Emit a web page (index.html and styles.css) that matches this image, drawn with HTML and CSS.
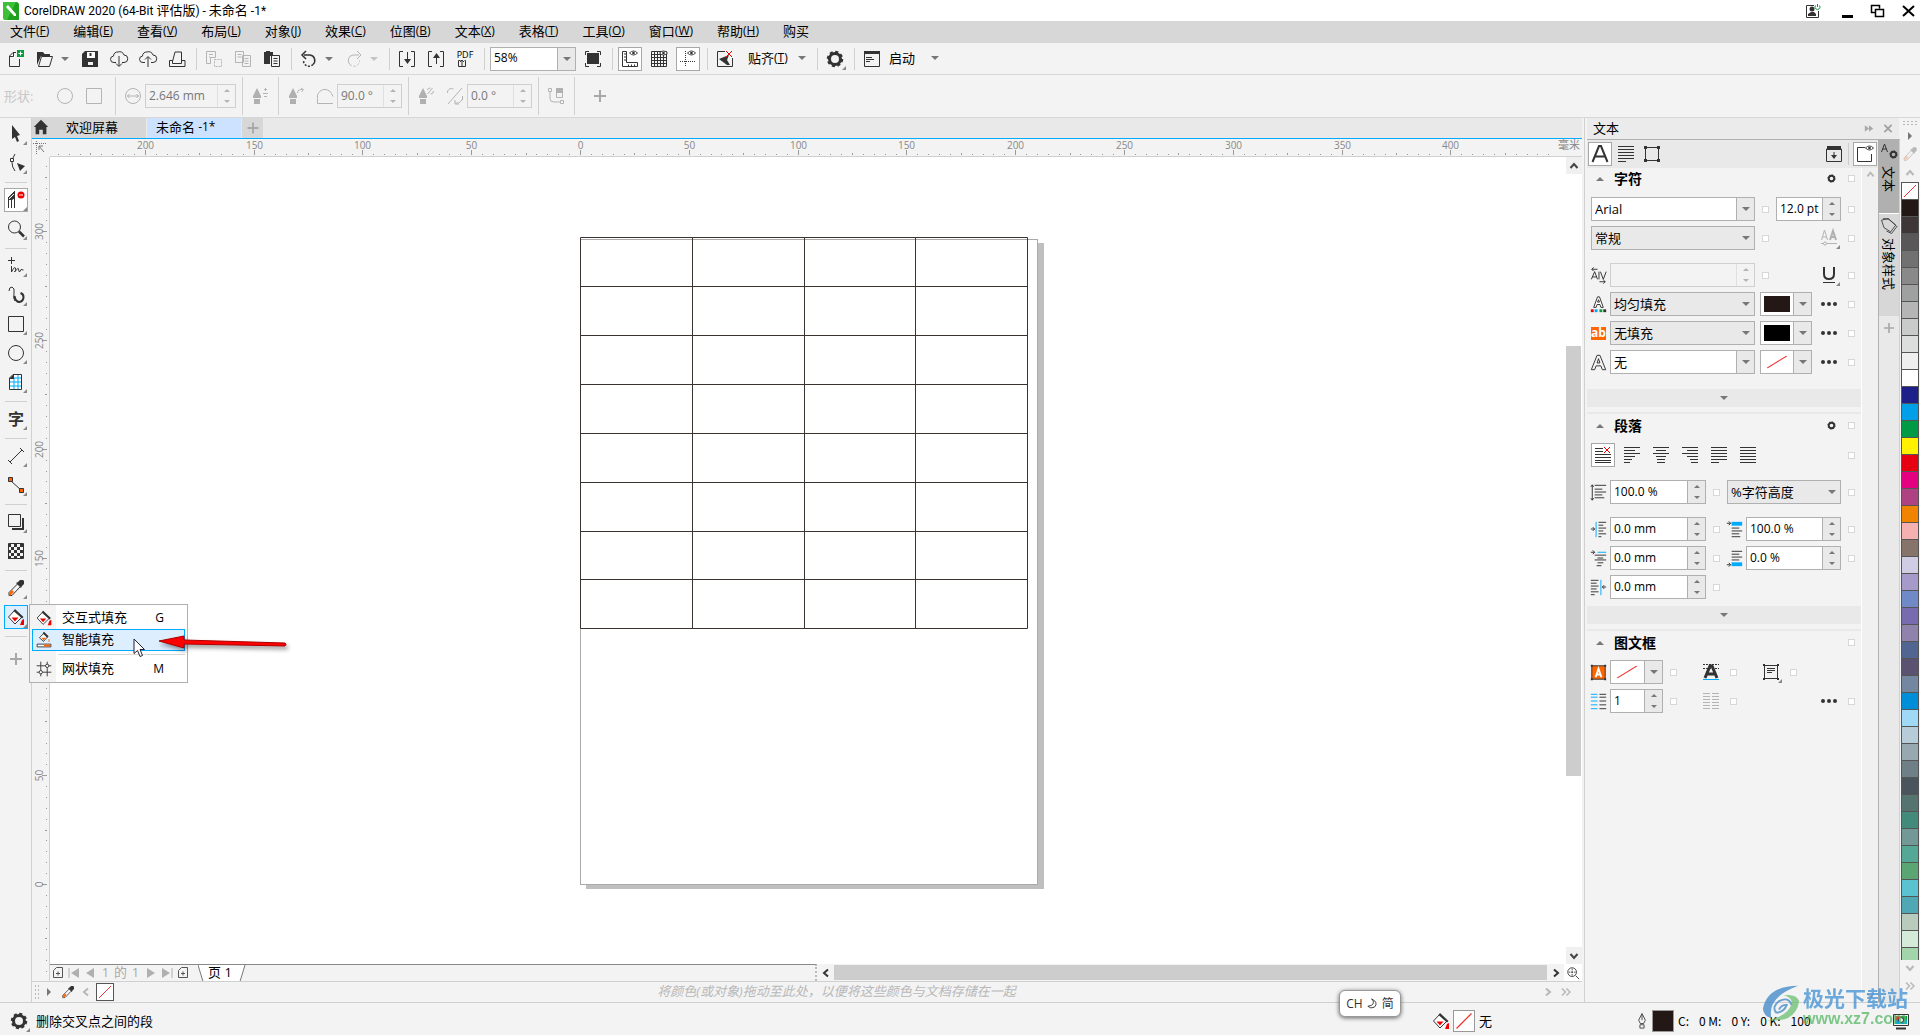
FILE: index.html
```html
<!DOCTYPE html>
<html lang="zh-CN">
<head>
<meta charset="utf-8">
<title>CorelDRAW 2020 (64-Bit 评估版) - 未命名 -1*</title>
<link rel="stylesheet" href="styles.css">
</head>
<body>
<svg class="defs" aria-hidden="true">
  <symbol id="i-new" viewBox="0 0 24 24"><path d="M12 5.500H9L5.500 9v10.500H15.500V12M9.500 5.500V9.500H5.500" class="s"/><path d="M13 3h7v7h-7z" fill="#0a9b3c"/><path d="M16.500 4.500v4M14.500 6.500h4" stroke="#fff"/></symbol>
  <symbol id="i-open" viewBox="0 0 24 24"><path d="M4 18V5h6l1.500 2H17v2H8z" fill="#333"/><path d="M8.500 9.500h11l-3 10h-11z" class="s"/></symbol>
  <symbol id="i-save" viewBox="0 0 24 24"><path d="M7 4h13v16H4V7z" fill="#333"/><path d="M9 5h8v6H9zM7 14h10" fill="#fff"/><path d="M12.500 6v3" stroke="#333" stroke-width="2"/><path d="M10 15h5v3h-5z" fill="#f3f3f3"/></symbol>
  <symbol id="i-cdown" viewBox="0 0 24 24"><path d="M9 15.500H7a3.200 3.200 0 0 1-.5-6.400A4 4 0 0 1 11 5a4.500 4.500 0 0 1 6 3 3.700 3.700 0 0 1 0 7.500h-2M12 9v10M9 16.500l3 3 3-3" class="s"/></symbol>
  <symbol id="i-cup" viewBox="0 0 24 24"><path d="M9 15.500H7a3.200 3.200 0 0 1-.5-6.400A4 4 0 0 1 11 5a4.500 4.500 0 0 1 6 3 3.700 3.700 0 0 1 0 7.500h-2M12 20V10M9 12.500l3-3 3 3" class="s"/></symbol>
  <symbol id="i-print" viewBox="0 0 24 24"><path d="M7.500 14.500L10 5h6.500v9.500M5 13.500h2.500v3h9v-3H20v6H4.500v-6z" class="s"/></symbol>
  <symbol id="i-cut" viewBox="0 0 24 24"><path d="M4.500 4.500h9v6h-5v6h-4zM7 7.500h4M7 10h1" class="g"/><path d="M12.500 12.500h7v7h-7z" class="g" stroke-dasharray="2 1"/></symbol>
  <symbol id="i-copy" viewBox="0 0 24 24"><path d="M4.500 4.500h8v11h-8zM6.500 7.500h4M6.500 10h4M11.500 8.500h8v11h-8zM13.500 11.500h4M13.500 14h4M13.500 16.500h4" class="g"/></symbol>
  <symbol id="i-paste" viewBox="0 0 24 24"><path d="M4 5h2V4h4v1h3v4h-3v8H4z" fill="#333"/><path d="M11.500 8.500h8v11h-8zM13.500 11.500h4M13.500 14h4M13.500 16.500h4" class="s"/></symbol>
  <symbol id="i-undo" viewBox="0 0 24 24"><path d="M7 8h6a5.500 5.500 0 0 1 3 9.500" fill="none" stroke="#333" stroke-width="1.500"/><path d="M16 17.500a5.500 5.500 0 0 1-9.500-4" fill="none" stroke="#333" stroke-width="1.500" stroke-dasharray="2 1.500"/><path d="M9 4L5 8l4 4" fill="none" stroke="#333" stroke-width="1.500"/></symbol>
  <symbol id="i-redo" viewBox="0 0 24 24"><path d="M17 8h-6a5.500 5.500 0 0 0-3 9.500" class="g"/><path d="M8 17.500a5.500 5.500 0 0 0 9.500-4" class="g" stroke-dasharray="2 2"/><path d="M15 4l4 4-4 4" class="g"/></symbol>
  <symbol id="i-import" viewBox="0 0 24 24"><path d="M8 4.500H4.500v15H8M16 4.500h3.500v15H16M12.500 5v10" class="s"/><path d="M9 12h7l-3.500 5z" fill="#333"/></symbol>
  <symbol id="i-export" viewBox="0 0 24 24"><path d="M8 4.500H4.500v15H8M16 4.500h3.500v15H16M12.500 17V8" class="s"/><path d="M9 11h7l-3.500-5z" fill="#333"/></symbol>
  <symbol id="i-pdf" viewBox="0 0 24 24"><path d="M5.500 19.500v-6h2M11.500 13.500h1v6h-7M9 19v-6M7 15l2-2 2 2" class="s"/></symbol>
  <symbol id="i-fit" viewBox="0 0 24 24"><path d="M6 6h12v11H6z" fill="#333"/><path d="M4.500 8V4.500H8M16 4.500h3.500V8M19.500 16v3.500H16M8 19.500H4.500V16" class="s"/></symbol>
  <symbol id="i-eye" viewBox="0 0 10 6"><path d="M.5 3Q5-1.500 9.500 3 5 7.500.5 3z" fill="#fff" stroke="#333"/><circle cx="5" cy="3" r="1.500" fill="#333"/></symbol>
  <symbol id="i-rulers" viewBox="0 0 24 24"><path d="M4.500 4.500h4v11h11v4h-15zM6 7h2.500M6 10h2.500M6 13h2.500M10.500 17.500v2M13.500 17.500v2M16.500 17.500v2" class="s"/><use href="#i-eye" x="11" y="3" width="9" height="6"/></symbol>
  <symbol id="i-grid" viewBox="0 0 24 24"><path d="M4.500 4.500h15v15h-15zM7.500 4v16M10.500 4v16M13.500 4v16M16.500 4v16M4 7.500h16M4 10.500h16M4 13.500h16M4 16.500h16" class="s"/><use href="#i-eye" x="12" y="3" width="9" height="6"/></symbol>
  <symbol id="i-guides" viewBox="0 0 24 24"><path d="M9.500 4v16M4 14.500h16" class="s" stroke-dasharray="1 1"/><use href="#i-eye" x="11" y="3" width="9" height="6"/></symbol>
  <symbol id="i-snap" viewBox="0 0 24 24"><path d="M12 4.500H4.500v15h15V11" class="s"/><path d="M6 12l10-4-2 5 3 5h-3z" fill="#333"/><path d="M13 4l6 6M19 4l-6 6" stroke="#e00"/></symbol>
  <symbol id="i-gear" viewBox="0 0 24 24"><circle cx="12" cy="12" r="5.500" fill="none" stroke="#333" stroke-width="3"/><circle cx="12" cy="12" r="7" fill="none" stroke="#333" stroke-width="2.500" stroke-dasharray="3 2.500"/></symbol>
  <symbol id="i-window" viewBox="0 0 24 24"><path d="M4.500 4.500h15v15h-15z" class="s"/><path d="M4 4h16v3H4z" fill="#333"/><path d="M6 10.500h6M6 12.500h8M6 14.500h4" class="s"/></symbol>
  <symbol id="i-ring" viewBox="0 0 24 24"><circle cx="12" cy="12" r="7.500" class="g"/></symbol>
  <symbol id="i-box" viewBox="0 0 24 24"><path d="M4.500 4.500h15v15h-15z" class="g"/></symbol>
  <symbol id="i-diam" viewBox="0 0 24 24"><circle cx="12" cy="12" r="7.500" class="g"/><path d="M6 12h12M8.500 10l-2 2 2 2M15.500 10l2 2-2 2" class="g"/></symbol>
  <symbol id="i-nib" viewBox="0 0 24 24"><path d="M9 4l4 8v2H5v-2zM6 15h6v5H6z" fill="#b0b0b0"/></symbol>
  <symbol id="i-nib1" viewBox="0 0 24 24"><use href="#i-nib"/><path d="M17.500 4v3M16 5.500h3M15 9.500h5M16 12.500h3" class="g"/></symbol>
  <symbol id="i-nib2" viewBox="0 0 24 24"><use href="#i-nib"/><path d="M13.500 9q0-4 5-3.500M17 4l2.500 1.500L17.500 8" class="g"/></symbol>
  <symbol id="i-nib3" viewBox="0 0 24 24"><use href="#i-nib"/><path d="M13.500 10l5-6M13.500 6q0-2 3-2M19.500 7q0 3-3 3" class="g"/></symbol>
  <symbol id="i-arc" viewBox="0 0 24 24"><path d="M20 19.500H4.500v-5a7.500 7.500 0 0 1 14-5l1.500 3" class="g"/></symbol>
  <symbol id="i-tilt" viewBox="0 0 24 24"><path d="M5 20L19 4M4.500 9a4 4 0 0 1 6-4M19.500 12a6 6 0 0 1-7 7M19.500 12v4M12 16v4h4" class="g"/></symbol>
  <symbol id="i-path" viewBox="0 0 24 24"><path d="M4.500 4.500h3v3h-3zM16.500 16.500h3v3h-3zM6 8v7q0 3 4 3h6M12.500 8.500h6v5h-6z" class="g"/><path d="M12 4h7v5h-7z" fill="#b0b0b0"/></symbol>
  <symbol id="i-plus" viewBox="0 0 24 24"><path d="M12 6v12M6 12h12" stroke="#a8a8a8" stroke-width="2"/></symbol>
  <symbol id="i-pick" viewBox="0 0 24 24"><path d="M8 3l8 10-3 1 2 5-2 1-2-5-3 2z" fill="#333"/></symbol>
  <symbol id="i-shape" viewBox="0 0 24 24"><path d="M11 3q-6 9 0 17" class="s"/><path d="M6.500 7.500h3v3h-3z" fill="#fff" stroke="#333"/><path d="M13 12l8 3-5 5z" fill="#333"/></symbol>
  <symbol id="i-seg" viewBox="0 0 24 24"><path d="M10.500 3v17M4.500 10v10M7.500 11v9M4 10l7-7" class="s"/><path d="M4 11l7-8v7l-3 2H4z" fill="#333"/><path d="M5 11l5-5" stroke="#fff"/><circle cx="17" cy="7" r="3.500" fill="#e00"/><path d="M15 7h4" stroke="#fff"/></symbol>
  <symbol id="i-zoom" viewBox="0 0 24 24"><circle cx="10.500" cy="10" r="6" class="s"/><path d="M15 14.500l5 5" stroke="#333" stroke-width="2.500"/></symbol>
  <symbol id="i-free" viewBox="0 0 24 24"><path d="M7.500 3v7M4 6.500h7M7.500 12v6q3-6 4-4t-1 4q4-5 4-3t1 3q1-4 4-2" class="s"/></symbol>
  <symbol id="i-art" viewBox="0 0 24 24"><path d="M5 8q0-4 3-4 3 1 2 6-1 6 1 8" class="s"/><path d="M10.500 13q1 6 5 6 4-1 4-5 0-3-3-4" fill="none" stroke="#333" stroke-width="2"/></symbol>
  <symbol id="i-rect" viewBox="0 0 24 24"><path d="M4.500 4.500h15v15h-15z" class="s"/></symbol>
  <symbol id="i-ell" viewBox="0 0 24 24"><circle cx="12" cy="12" r="7.500" class="s"/></symbol>
  <symbol id="i-table" viewBox="0 0 24 24"><path d="M9 4.500h8.500v15h-12V8z" fill="#fff" stroke="#333"/><path d="M6 12h11M6 16h11M10 8v11M14 5v14M10 8h7" stroke="#0af"/><path d="M5 9l5-5v5z" fill="#333"/></symbol>
  <symbol id="i-dim" viewBox="0 0 24 24"><path d="M6 18L18 6M4 16l4 4M16 4l4 4" class="s"/></symbol>
  <symbol id="i-conn" viewBox="0 0 24 24"><path d="M7 8l10 9" class="s"/><path d="M4.500 4.500h4v4h-4zM15.500 15.500h4v4h-4z" fill="#f60" stroke="#333"/></symbol>
  <symbol id="i-shadow" viewBox="0 0 24 24"><path d="M18 8h2v12H8v-2h10z" fill="#333"/><path d="M4.500 4.500h12v12h-12z" fill="#f3f3f3" stroke="#333"/></symbol>
  <symbol id="i-trans" viewBox="0 0 24 24"><path d="M4.500 4.500h15v15h-15z" class="s"/><path d="M4 6.500h16M4 12.500h16M4 18.500h16" stroke="#333" stroke-width="3" stroke-dasharray="3 3"/><path d="M7 9.500h13M7 15.500h13" stroke="#333" stroke-width="3" stroke-dasharray="3 3"/></symbol>
  <symbol id="i-eyed" viewBox="0 0 24 24"><path d="M13.500 8L5 16.500V19.500H8L16 11" class="s"/><path d="M5 17l3-3 2 2-3.500 3.500H5z" fill="#f60"/><path d="M12 7l2-1 2-2h3l1 1v3l-2 2-1 2z" fill="#333"/></symbol>
  <symbol id="i-bucket" viewBox="0 0 24 24"><path d="M11 5l7 7-7 7-6.500-7z" fill="#fff" stroke="#333"/><path d="M11 4l8.500 8-1.500 1.500L9.500 6z" fill="#333"/><path d="M7.500 12.500h7l-3.500 4zM18 15l2-1v6h-4z" fill="#e00"/></symbol>
  <symbol id="i-smart" viewBox="0 0 24 24"><path d="M12 4.500l4 4-4.500 5-4.500-4z" fill="#fff" stroke="#333"/><path d="M12 3l5 5-1.500 1.500-5-5z" fill="#333"/><path d="M9 9.500h5l-2.500 3z" fill="#f60"/><path d="M17.500 11v3" stroke="#f60"/><path d="M4.500 16.500h15v3h-15z" fill="#fff" stroke="#333"/><path d="M12 17h7v2h-7z" fill="#f60"/></symbol>
  <symbol id="i-mesh" viewBox="0 0 24 24"><path d="M8.500 4v16M15.500 4v16M4 8.500h16M4 15.500h16" class="s"/><circle cx="8.500" cy="15.500" r="1.800" fill="#fff" stroke="#333"/><circle cx="15.500" cy="8.500" r="1.800" fill="#fff" stroke="#333"/></symbol>
  <symbol id="i-home" viewBox="0 0 20 20"><path d="M10 2l8 8h-2v8h-4v-5H8v5H4v-8H2z" fill="#333"/></symbol>
  <symbol id="i-origin" viewBox="0 0 16 16"><path d="M4.500 2v13M1 4.500h13" stroke="#777" stroke-dasharray="1 1"/><path d="M7 11V7h4M7 7l5 6" fill="none" stroke="#777"/></symbol>
  <symbol id="i-acap" viewBox="0 0 24 24"><path d="M4.500 20L11 4h2l6.500 16M7 14.500h10" fill="none" stroke="#333" stroke-width="2"/></symbol>
  <symbol id="i-just" viewBox="0 0 24 24"><path d="M4 4.500h16M4 7.500h16M4 10.500h16M4 13.500h16M4 16.500h16M4 19.500h8" class="s"/></symbol>
  <symbol id="i-full" viewBox="0 0 24 24"><path d="M4 4.500h16M4 7.500h16M4 10.500h16M4 13.500h16M4 16.500h16M4 19.500h16" class="s"/></symbol>
  <symbol id="i-left" viewBox="0 0 24 24"><path d="M4 4.500h16M4 7.500h11M4 10.500h16M4 13.500h11M4 16.500h8M4 19.500h6" class="s"/></symbol>
  <symbol id="i-center" viewBox="0 0 24 24"><path d="M4 4.500h16M7 7.500h10M4 10.500h16M7 13.500h10M8 16.500h8M8 19.500h8" class="s"/></symbol>
  <symbol id="i-right" viewBox="0 0 24 24"><path d="M4 4.500h16M9 7.500h11M4 10.500h16M9 13.500h11M12 16.500h8M13 19.500h7" class="s"/></symbol>
  <symbol id="i-noalign" viewBox="0 0 24 24"><path d="M4 5.500h8M4 8.500h8M4 11.500h16M4 14.500h16M4 17.500h16M4 19.500h16" class="s"/><path d="M13 4l6 6M19 4l-6 6" stroke="#e00"/></symbol>
  <symbol id="i-frame" viewBox="0 0 24 24"><path d="M5.500 5.500h13v13h-13z" class="s"/><path d="M4 4h3v3H4zM17 4h3v3h-3zM4 17h3v3H4zM17 17h3v3h-3z" fill="#333"/></symbol>
  <symbol id="i-dock" viewBox="0 0 24 24"><path d="M4.500 7.500h15v12h-15zM12 10v6" class="s"/><path d="M5 4h14v2l1 2H4l1-2zM9 13h6l-3 4z" fill="#333"/></symbol>
  <symbol id="i-prev" viewBox="0 0 24 24"><path d="M12 5.500H4.500v14h14V12" class="s"/><use href="#i-eye" x="12" y="3" width="9" height="6"/></symbol>
  <symbol id="i-sgear" viewBox="0 0 12 12"><circle cx="6" cy="6" r="3" fill="none" stroke="#333" stroke-width="2"/><circle cx="6" cy="6" r="4" fill="none" stroke="#333" stroke-dasharray="1.500 1.600"/></symbol>
  <symbol id="i-kern" viewBox="0 0 24 24"><path d="M4.500 16L8 8l3 8M5.500 13.500H10M12.500 8v8M14 8l3 8 3-8M5 5.500h6M5 5.500l2-2M5 5.500l2 2M13 18.500h6M19 18.500l-2-2M19 18.500l-2 2" class="s"/></symbol>
  <symbol id="i-fillA" viewBox="0 0 24 24"><path d="M7 15l4-11h2l4 11h-2.500l-1-3h-3l-1 3zM11 9.500h2L12 7z" fill="#fff" stroke="#333"/><path d="M4 17h3v3H4z" fill="#e00"/><path d="M8 17h3v3H8z" fill="#0af"/><path d="M13 17h3v3h-3z" fill="#0a9b3c"/><path d="M17 17h3v3h-3z" fill="#333"/></symbol>
  <symbol id="i-outA" viewBox="0 0 24 24"><path d="M4.500 19.500l6-15h3l6 15H16l-1.500-4h-5l-1.500 4zM10.500 12.500h3L12 8z" class="s"/></symbol>
  <symbol id="i-ul" viewBox="0 0 24 24"><path d="M7 4v7q0 5 5 5t5-5V4" fill="none" stroke="#333" stroke-width="2"/><path d="M6 19.500h12" class="s"/></symbol>
  <symbol id="i-aa" viewBox="0 0 24 24"><path d="M4.500 14l3-10 3 10M5.500 11h4" class="g"/><path d="M13 14l3-9 3 9M14 11h4" fill="none" stroke="#b0b0b0" stroke-width="2"/><path d="M4 17.500h16" class="g"/><circle cx="8" cy="17.500" r="1.500" fill="#f3f3f3" stroke="#b0b0b0"/></symbol>
  <symbol id="i-dots" viewBox="0 0 24 24"><circle cx="6" cy="12" r="2" fill="#333"/><circle cx="12" cy="12" r="2" fill="#333"/><circle cx="18" cy="12" r="2" fill="#333"/></symbol>
  <symbol id="i-lead" viewBox="0 0 24 24"><path d="M5.500 4v16M4 6l1.500-2L7 6M4 18l1.500 2L7 18M8 4.500h12M8 8.500h8M8 11.500h12M8 14.500h8M8 17.500h10" class="s"/></symbol>
  <symbol id="i-indl" viewBox="0 0 24 24"><path d="M4 11.500h4M6 9.500l2 2-2 2M12 4.500h8M12 7.500h5M12 10.500h8M12 13.500h5M12 16.500h8M12 19.500h3" class="s"/><path d="M9.500 4v16" stroke="#0af"/></symbol>
  <symbol id="i-indf" viewBox="0 0 24 24"><path d="M4 5.500h4M6 3.500l2 2-2 2M8 8.500h12M11 11.500h6M8 13.500h12M11 16.500h6M10 19.500h5" class="s"/><path d="M11 5.500h9" stroke="#0af"/></symbol>
  <symbol id="i-indr" viewBox="0 0 24 24"><path d="M4 4.500h8M4 7.500h6M4 10.500h8M4 13.500h6M4 16.500h8M4 19.500h4M16 11.500h4M18 9.500l-2 2 2 2" class="s"/><path d="M14.500 4v16" stroke="#0af"/></symbol>
  <symbol id="i-before" viewBox="0 0 24 24"><path d="M9 4h11v4H9z" fill="#0af"/><path d="M4 5.500h4M6 3.500l2 2-2 2M9 10.500h8M9 13.500h11M9 16.500h8M9 19.500h9" class="s"/></symbol>
  <symbol id="i-after" viewBox="0 0 24 24"><path d="M9 16h11v4H9z" fill="#0af"/><path d="M4 18.500h4M6 16.500l2 2-2 2M9 4.500h11M9 7.500h8M9 10.500h11M9 13.500h8" class="s"/></symbol>
  <symbol id="i-frA" viewBox="0 0 24 24"><path d="M5 5h14v14H5z" fill="#f60" stroke="#333"/><path d="M4 4h2v2H4zM18 4h2v2h-2zM4 18h2v2H4zM18 18h2v2h-2z" fill="#333"/><path d="M9 17l3-9 3 9M10 14h4" fill="none" stroke="#fff" stroke-width="2"/></symbol>
  <symbol id="i-vA" viewBox="0 0 24 24"><path d="M6 18l5-12h2l5 12M8 14h8" fill="none" stroke="#333" stroke-width="3"/><path d="M4 4.500h16M4 8.500h16" class="s" stroke-dasharray="2 1"/><path d="M4 19.500h16" stroke="#0af"/></symbol>
  <symbol id="i-frl" viewBox="0 0 24 24"><path d="M5.500 5.500h13v13h-13zM8 8.500h8M8 10.500h8M8 12.500h5" class="s"/><path d="M4 4h2v2H4zM18 4h2v2h-2zM4 18h2v2H4zM18 18h2v2h-2z" fill="#333"/></symbol>
  <symbol id="i-cols" viewBox="0 0 24 24"><path d="M4 4.500h7M4 7.500h7M4 11.500h7M4 15.500h7M4 19.500h7" stroke="#0af"/><path d="M13 4.500h7M13 7.500h7M13 11.500h7M13 15.500h7M13 19.500h7" class="s"/></symbol>
  <symbol id="i-gcols" viewBox="0 0 24 24"><path d="M4 4.500h7M4 7.500h7M4 10.500h7M4 13.500h7M4 16.500h7M4 19.500h7M13 4.500h7M13 7.500h7M13 10.500h7M13 13.500h7M13 16.500h7M13 19.500h7" class="g"/></symbol>
  <symbol id="i-addp" viewBox="0 0 10 12"><path d="M3.500.5h6v10h-9v-7zM3 6.500h4M5 4.500v4" fill="none" stroke="#555"/></symbol>
  <symbol id="i-up" viewBox="0 0 10 10"><path d="M1.500 7L5 3l3.500 4" fill="none" stroke="currentColor" stroke-width="2"/></symbol>
  <symbol id="i-down" viewBox="0 0 10 10"><path d="M1.500 3L5 7l3.500-4" fill="none" stroke="currentColor" stroke-width="2"/></symbol>
  <symbol id="i-lt" viewBox="0 0 10 10"><path d="M7 1.500L3 5l4 3.500" fill="none" stroke="currentColor" stroke-width="2"/></symbol>
  <symbol id="i-gt" viewBox="0 0 10 10"><path d="M3 1.500L7 5 3 8.500" fill="none" stroke="currentColor" stroke-width="2"/></symbol>
  <symbol id="i-dgt" viewBox="0 0 10 10"><path d="M1 1.500L4.500 5 1 8.500M5.500 1.500L9 5 5.500 8.500" fill="none" stroke="currentColor" stroke-width="1.500"/></symbol>
  <symbol id="i-none" viewBox="0 0 24 24" preserveAspectRatio="none"><path d="M3 21L21 3" stroke="#e33" stroke-width="1.500"/></symbol>
  <symbol id="i-tags" viewBox="0 0 24 24"><path d="M3 5l8-2 9 8-6 8-8-5zM5 3l7 1 9 8M9 18l6 3 7-9" class="s"/></symbol>
  <symbol id="i-pen" viewBox="0 0 24 24"><path d="M12 3l4 8-2 4h-4l-2-4zM12 4v7M9.500 16.500h5v4h-5z" class="s"/></symbol>
</svg>

<header class="titlebar">
  <svg class="logo" viewBox="0 0 16 18"><path d="M0 0h13q3 0 3 3v15H3q-3 0-3-3z" fill="#1fa01f"/><path d="M0 0h13l-9 18H3q-3 0-3-3z" fill="#3cc03a"/><path d="M3 5l2-2 8 9v2h-2z" fill="#fff"/></svg>
  <h1 class="title"><span>CorelDRAW 2020 (64-Bit </span>评估版<span>) - </span>未命名<span> -1*</span></h1>
  <div class="winbtns">
    <button aria-label="账户"><svg viewBox="0 0 16 16"><path d="M9 2.500H1.500v12h12V8" class="s"/><circle cx="7" cy="6" r="2.500" fill="#333"/><path d="M3 13v-2l3-2h3l2 2v2z" fill="#333"/><path d="M10.500 2.500a2.500 2.500 0 1 0 4 0M12.500 1v3" fill="none" stroke="#0a9b3c"/></svg></button>
    <button aria-label="最小化"><svg viewBox="0 0 16 16"><path d="M3 12h11v3H3z" fill="#000"/></svg></button>
    <button aria-label="还原"><svg viewBox="0 0 16 16"><path d="M5.500 9.500h-4v-7h8v3M5.500 6.500h8v7h-8z" fill="none" stroke="#000" stroke-width="1.500"/></svg></button>
    <button aria-label="关闭"><svg viewBox="0 0 16 16"><path d="M2 3l11 10M13 3L2 13" stroke="#000" stroke-width="2"/></svg></button>
  </div>
</header>

<nav class="menubar">
  <button>文件<span>(<u>F</u>)</span></button><button>编辑<span>(<u>E</u>)</span></button><button>查看<span>(<u>V</u>)</span></button><button>布局<span>(<u>L</u>)</span></button><button>对象<span>(<u>J</u>)</span></button><button>效果<span>(<u>C</u>)</span></button><button>位图<span>(<u>B</u>)</span></button><button>文本<span>(<u>X</u>)</span></button><button>表格<span>(<u>T</u>)</span></button><button>工具<span>(<u>O</u>)</span></button><button>窗口<span>(<u>W</u>)</span></button><button>帮助<span>(<u>H</u>)</span></button><button>购买</button>
</nav>

<div class="toolbar" role="toolbar" aria-label="标准">
  <button class="ib" aria-label="新建"><svg><use href="#i-new"/></svg></button>
  <div class="pair"><button class="ib" aria-label="打开"><svg><use href="#i-open"/></svg></button><button class="drop" aria-label="最近文件"></button></div>
  <button class="ib" aria-label="保存"><svg><use href="#i-save"/></svg></button>
  <button class="ib" aria-label="从云打开"><svg><use href="#i-cdown"/></svg></button>
  <button class="ib" aria-label="保存到云"><svg><use href="#i-cup"/></svg></button>
  <button class="ib" aria-label="打印"><svg><use href="#i-print"/></svg></button>
  <i class="sep"></i>
  <button class="ib" aria-label="剪切" disabled><svg><use href="#i-cut"/></svg></button>
  <button class="ib" aria-label="复制" disabled><svg><use href="#i-copy"/></svg></button>
  <button class="ib" aria-label="粘贴"><svg><use href="#i-paste"/></svg></button>
  <i class="sep"></i>
  <div class="pair"><button class="ib" aria-label="撤消"><svg><use href="#i-undo"/></svg></button><button class="drop" aria-label="撤消列表"></button></div>
  <div class="pair"><button class="ib" aria-label="重做" disabled><svg><use href="#i-redo"/></svg></button><button class="drop off" aria-label="重做列表" disabled></button></div>
  <i class="sep"></i>
  <button class="ib" aria-label="导入"><svg><use href="#i-import"/></svg></button>
  <button class="ib" aria-label="导出"><svg><use href="#i-export"/></svg></button>
  <button class="ib pdf" aria-label="发布为PDF"><span>PDF</span><svg><use href="#i-pdf"/></svg></button>
  <i class="sep"></i>
  <div class="combo edit zoomlevel"><select aria-label="缩放级别"><option>58%</option></select></div>
  <button class="ib" aria-label="全屏预览"><svg><use href="#i-fit"/></svg></button>
  <i class="sep"></i>
  <button class="ib on" aria-label="显示标尺"><svg><use href="#i-rulers"/></svg></button>
  <button class="ib" aria-label="显示网格"><svg><use href="#i-grid"/></svg></button>
  <button class="ib on" aria-label="显示辅助线"><svg><use href="#i-guides"/></svg></button>
  <i class="sep"></i>
  <button class="ib" aria-label="贴齐关闭"><svg><use href="#i-snap"/></svg></button>
  <button class="txt snap">贴齐<span>(<u>T</u>)</span><i class="tri"></i></button>
  <i class="sep"></i>
  <button class="ib fly" aria-label="选项"><svg><use href="#i-gear"/></svg></button>
  <i class="sep"></i>
  <button class="ib" aria-label="应用程序启动器"><svg><use href="#i-window"/></svg></button>
  <button class="txt launch">启动<i class="tri"></i></button>
</div>

<div class="propbar" role="toolbar" aria-label="属性栏">
  <div class="psec first"><span class="plabel">形状:</span><button class="ib" aria-label="圆形" disabled><svg><use href="#i-ring"/></svg></button><button class="ib" aria-label="方形" disabled><svg><use href="#i-box"/></svg></button></div>
  <div class="psec"><div class="pair"><svg class="ico"><use href="#i-diam"/></svg><div class="spin off w91"><input aria-label="笔尖半径" value="2.646 mm" disabled><span class="arrows"><button disabled aria-label="增加"></button><button disabled aria-label="减少"></button></span></div></div></div>
  <div class="psec"><button class="ib" aria-label="笔压" disabled><svg><use href="#i-nib1"/></svg></button></div>
  <div class="psec"><button class="ib" aria-label="笔倾斜" disabled><svg><use href="#i-nib2"/></svg></button><div class="pair"><svg class="ico"><use href="#i-arc"/></svg><div class="spin off w65"><input aria-label="倾斜角" value="90.0 °" disabled><span class="arrows"><button disabled aria-label="增加"></button><button disabled aria-label="减少"></button></span></div></div></div>
  <div class="psec"><button class="ib" aria-label="笔方位" disabled><svg><use href="#i-nib3"/></svg></button><div class="pair"><svg class="ico"><use href="#i-tilt"/></svg><div class="spin off w65"><input aria-label="方位角" value="0.0 °" disabled><span class="arrows"><button disabled aria-label="增加"></button><button disabled aria-label="减少"></button></span></div></div></div>
  <div class="psec"><button class="ib" aria-label="节点" disabled><svg><use href="#i-path"/></svg></button></div>
  <button class="ib padd" aria-label="自定义"><svg><use href="#i-plus"/></svg></button>
</div>

<main class="work">
  <aside class="toolbox">
    <button class="ib fly" aria-label="选择"><svg><use href="#i-pick"/></svg></button>
    <button class="ib fly" aria-label="形状"><svg><use href="#i-shape"/></svg></button>
    <i class="hsep"></i>
    <button class="ib fly on" aria-label="虚拟段删除"><svg><use href="#i-seg"/></svg></button>
    <button class="ib fly" aria-label="缩放"><svg><use href="#i-zoom"/></svg></button>
    <i class="hsep"></i>
    <button class="ib fly" aria-label="手绘"><svg><use href="#i-free"/></svg></button>
    <button class="ib fly" aria-label="艺术笔"><svg><use href="#i-art"/></svg></button>
    <button class="ib fly" aria-label="矩形"><svg><use href="#i-rect"/></svg></button>
    <button class="ib fly" aria-label="椭圆形"><svg><use href="#i-ell"/></svg></button>
    <button class="ib fly" aria-label="图纸"><svg><use href="#i-table"/></svg></button>
    <i class="hsep"></i>
    <button class="ib fly zi" aria-label="文本">字</button>
    <i class="hsep"></i>
    <button class="ib fly" aria-label="平行度量"><svg><use href="#i-dim"/></svg></button>
    <button class="ib fly" aria-label="连接器"><svg><use href="#i-conn"/></svg></button>
    <i class="hsep"></i>
    <button class="ib fly" aria-label="阴影"><svg><use href="#i-shadow"/></svg></button>
    <button class="ib" aria-label="透明度"><svg><use href="#i-trans"/></svg></button>
    <i class="hsep"></i>
    <button class="ib fly" aria-label="颜色滴管"><svg><use href="#i-eyed"/></svg></button>
    <div class="anchor">
      <button class="ib fly hot" aria-label="填充"><svg><use href="#i-bucket"/></svg></button>
      <div class="flyout" role="menu">
        <button role="menuitem"><svg class="ico"><use href="#i-bucket"/></svg><span class="fname">交互式填充</span><kbd>G</kbd></button>
        <button role="menuitem" class="cur"><svg class="ico"><use href="#i-smart"/></svg><span class="fname">智能填充</span></button>
        <i class="fsep"></i>
        <button role="menuitem"><svg class="ico"><use href="#i-mesh"/></svg><span class="fname">网状填充</span><kbd>M</kbd></button>
        <svg class="pointer" viewBox="0 0 14 20"><path d="M1 1v14.500l3.500-3 2.500 6 2.500-1-2.500-6h4.500z" fill="#fff" stroke="#223"/></svg>
        <svg class="callout" viewBox="0 0 134 20"><path d="M1 8L26 3v4l101 3q2 1 0 3L26 11v4z" fill="#f00" stroke="#a00"/></svg>
      </div>
    </div>
    <i class="hsep"></i>
    <button class="ib tadd" aria-label="自定义"><svg><use href="#i-plus"/></svg></button>
  </aside>

  <section class="doc">
    <div class="tabs" role="tablist">
      <button class="tab" role="tab"><svg><use href="#i-home"/></svg>欢迎屏幕</button>
      <button class="tab active" role="tab">未命名<span>&nbsp;-1*</span></button>
      <button class="tab more" aria-label="新建标签"><svg><use href="#i-plus"/></svg></button>
    </div>
    <div class="stage">
      <div class="corner"><svg><use href="#i-origin"/></svg></div>
      <div class="hruler"><svg id="hr"></svg><span>毫米</span></div>
      <div class="vruler"><svg id="vr"></svg></div>
      <div class="canvas">
        <div class="sheet"></div>
        <svg class="drawing" viewBox="0 0 449 393"><path d="M.5.500h447v391H.5zM112.500 0v391M224.500 0v391M335.500 0v391M0 49.500h448M0 98.500h448M0 147.500h448M0 196.500h448M0 245.500h448M0 294.500h448M0 342.500h448" fill="none" stroke="#3a3330"/></svg>
      </div>
      <div class="vscroll"><button aria-label="向上"><svg><use href="#i-up"/></svg></button><div class="gap1"></div><div class="thumb"></div><div class="gap2"></div><button aria-label="向下"><svg><use href="#i-down"/></svg></button></div>
      <div class="pagebar">
        <div class="pages">
          <button aria-label="前加页"><svg class="addp"><use href="#i-addp"/></svg></button>
          <button aria-label="首页"><svg viewBox="0 0 12 10"><path d="M1 0v10" stroke="#b0b0b0"/><path d="M11 0v10L3 5z" fill="#b0b0b0"/></svg></button>
          <button aria-label="上一页"><svg viewBox="0 0 12 10"><path d="M10 0v10L2 5z" fill="#b0b0b0"/></svg></button>
          <span class="pn">1</span><span class="pn">的</span><span class="pn">1</span>
          <button aria-label="下一页"><svg viewBox="0 0 12 10"><path d="M2 0v10l8-5z" fill="#b0b0b0"/></svg></button>
          <button aria-label="末页"><svg viewBox="0 0 12 10"><path d="M11 0v10" stroke="#b0b0b0"/><path d="M1 0v10l8-5z" fill="#b0b0b0"/></svg></button>
          <button aria-label="后加页"><svg class="addp"><use href="#i-addp"/></svg></button>
          <button class="pagetab"><svg viewBox="0 0 48 17" preserveAspectRatio="none"><path d="M0 0l5 16.500h37L47 0" fill="#fff" stroke="#777"/></svg><span>页 1</span></button>
        </div>
        <div class="hscroll"><button aria-label="向左"><svg><use href="#i-lt"/></svg></button><div class="thumb"></div><button aria-label="向右"><svg><use href="#i-gt"/></svg></button></div>
        <button class="nav" aria-label="导航器"><svg viewBox="0 0 16 16"><circle cx="7" cy="7" r="5" class="s"/><path d="M7 3v8M3 7h8" class="s" stroke-dasharray="2 1"/><path d="M11 11l4 4" class="s"/></svg></button>
      </div>
    </div>
    <div class="docpal">
      <i class="grip"></i><button class="side" aria-label="菜单"><i class="rtri"></i></button>
      <button class="dropper" aria-label="滴管"><svg><use href="#i-eyed"/></svg></button>
      <svg class="chev"><use href="#i-lt"/></svg>
      <button class="nosw" aria-label="无颜色"><svg><use href="#i-none"/></svg></button>
      <em>将颜色(或对象)拖动至此处，以便将这些颜色与文档存储在一起</em>
      <svg class="chev"><use href="#i-gt"/></svg><svg class="chev d"><use href="#i-dgt"/></svg>
    </div>
  </section>

  <aside class="docker">
    <div class="dhead"><h2>文本</h2><svg viewBox="0 0 12 10"><path d="M1 1v8l5-4zM6 1v8l5-4z" fill="#a8a8a8"/></svg><svg viewBox="0 0 10 10"><path d="M1 1l8 8M9 1L1 9" stroke="#a0a0a0" stroke-width="2"/></svg></div>
    <div class="dbody">
      <div class="dmain">
        <div class="dtools">
          <button class="ib on" aria-label="字符"><svg><use href="#i-acap"/></svg></button><button class="ib" aria-label="段落"><svg><use href="#i-just"/></svg></button><button class="ib" aria-label="图文框"><svg><use href="#i-frame"/></svg></button>
          <button class="ib push" aria-label="停靠"><svg><use href="#i-dock"/></svg></button><i class="dsep"></i><button class="ib on" aria-label="预览"><svg><use href="#i-prev"/></svg></button>
        </div>
        <div class="dcols">
          <div class="props">
            <div class="shead"><i class="utri"></i><h3>字符</h3><svg class="sg"><use href="#i-sgear"/></svg><span class="cell"><i></i></span></div>
            <div class="row"><div class="combo edit ml grow"><select aria-label="字体"><option>Arial</option></select></div><span class="cell"><i></i></span><div class="spin w65 sp1"><input aria-label="字号" value="12.0 pt"><span class="arrows"><button aria-label="增加"></button><button aria-label="减少"></button></span></div><span class="cell"><i></i></span></div>
            <div class="row"><div class="combo ml w164"><select aria-label="字形"><option>常规</option></select></div><span class="cell"><i></i></span><button class="ib fly off push" aria-label="可变字体"><svg><use href="#i-aa"/></svg></button><span class="cell"><i></i></span></div>
            <div class="row top8"><svg class="lead"><use href="#i-kern"/></svg><div class="spin off w145"><input aria-label="字距" disabled><span class="arrows"><button disabled aria-label="增加"></button><button disabled aria-label="减少"></button></span></div><span class="cell"><i></i></span><button class="ib fly push" aria-label="下划线"><svg><use href="#i-ul"/></svg></button><span class="cell"><i></i></span></div>
            <div class="row"><svg class="lead"><use href="#i-fillA"/></svg><div class="combo w145"><select aria-label="填充类型"><option>均匀填充</option></select></div><button class="sw" aria-label="填充颜色"><b class="ink"></b></button><button class="ib push" aria-label="更多"><svg><use href="#i-dots"/></svg></button><span class="cell"><i></i></span></div>
            <div class="row"><span class="ablead">ab</span><div class="combo w145"><select aria-label="背景填充"><option>无填充</option></select></div><button class="sw" aria-label="背景颜色"><b class="black"></b></button><button class="ib push" aria-label="更多"><svg><use href="#i-dots"/></svg></button><span class="cell"><i></i></span></div>
            <div class="row"><svg class="lead"><use href="#i-outA"/></svg><div class="combo edit w145"><select aria-label="轮廓宽度"><option>无</option></select></div><button class="sw" aria-label="轮廓颜色"><b><svg><use href="#i-none"/></svg></b></button><button class="ib push" aria-label="更多"><svg><use href="#i-dots"/></svg></button><span class="cell"><i></i></span></div>
            <button class="expand big" aria-label="展开字符"><i class="tri"></i></button>

            <div class="shead line"><i class="utri"></i><h3>段落</h3><svg class="sg"><use href="#i-sgear"/></svg><span class="cell"><i></i></span></div>
            <div class="row aligns"><button class="ib on ml" aria-label="无对齐"><svg><use href="#i-noalign"/></svg></button><button class="ib" aria-label="左对齐"><svg><use href="#i-left"/></svg></button><button class="ib" aria-label="居中"><svg><use href="#i-center"/></svg></button><button class="ib" aria-label="右对齐"><svg><use href="#i-right"/></svg></button><button class="ib" aria-label="两端对齐"><svg><use href="#i-just"/></svg></button><button class="ib" aria-label="强制两端对齐"><svg><use href="#i-full"/></svg></button><span class="cell push"><i></i></span></div>
            <div class="row top8"><svg class="lead"><use href="#i-lead"/></svg><div class="spin w96"><input aria-label="行间距" value="100.0 %"><span class="arrows"><button aria-label="增加"></button><button aria-label="减少"></button></span></div><span class="cell"><i></i></span><div class="combo grow sp1"><select aria-label="间距单位"><option>%字符高度</option></select></div><span class="cell"><i></i></span></div>
            <div class="row top8"><svg class="lead"><use href="#i-indl"/></svg><div class="spin w96"><input aria-label="左缩进" value="0.0 mm"><span class="arrows"><button aria-label="增加"></button><button aria-label="减少"></button></span></div><span class="cell"><i></i></span><svg class="lead n"><use href="#i-before"/></svg><div class="spin grow"><input aria-label="段前间距" value="100.0 %"><span class="arrows"><button aria-label="增加"></button><button aria-label="减少"></button></span></div><span class="cell"><i></i></span></div>
            <div class="row"><svg class="lead"><use href="#i-indf"/></svg><div class="spin w96"><input aria-label="首行缩进" value="0.0 mm"><span class="arrows"><button aria-label="增加"></button><button aria-label="减少"></button></span></div><span class="cell"><i></i></span><svg class="lead n"><use href="#i-after"/></svg><div class="spin grow"><input aria-label="段后间距" value="0.0 %"><span class="arrows"><button aria-label="增加"></button><button aria-label="减少"></button></span></div><span class="cell"><i></i></span></div>
            <div class="row"><svg class="lead"><use href="#i-indr"/></svg><div class="spin w96"><input aria-label="右缩进" value="0.0 mm"><span class="arrows"><button aria-label="增加"></button><button aria-label="减少"></button></span></div><span class="cell"><i></i></span></div>
            <button class="expand" aria-label="展开段落"><i class="tri"></i></button>

            <div class="shead line"><i class="utri"></i><h3>图文框</h3><span class="cell"><i></i></span></div>
            <div class="row"><svg class="lead"><use href="#i-frA"/></svg><button class="sw flat" aria-label="图文框颜色"><b><svg><use href="#i-none"/></svg></b></button><span class="cell"><i></i></span><button class="ib ml16" aria-label="垂直对齐"><svg><use href="#i-vA"/></svg></button><span class="cell"><i></i></span><button class="ib fly ml16" aria-label="文本框选项"><svg><use href="#i-frl"/></svg></button><span class="cell"><i></i></span></div>
            <div class="row"><svg class="lead"><use href="#i-cols"/></svg><div class="spin w53"><input aria-label="栏数" value="1"><span class="arrows"><button aria-label="增加"></button><button aria-label="减少"></button></span></div><span class="cell"><i></i></span><button class="ib ml16" aria-label="栏宽" disabled><svg><use href="#i-gcols"/></svg></button><span class="cell"><i></i></span><button class="ib push" aria-label="更多"><svg><use href="#i-dots"/></svg></button><span class="cell"><i></i></span></div>
          </div>
          <div class="dscroll"><svg><use href="#i-up"/></svg><svg><use href="#i-down"/></svg></div>
        </div>
      </div>
      <div class="dtabs">
        <button class="dtab act"><svg viewBox="0 0 20 20"><path d="M2.500 10L5.500 2l3 8M3.500 7h4" class="s"/><use href="#i-sgear" x="9" y="7" width="11" height="11"/></svg><span>文本</span></button>
        <button class="dtab"><svg viewBox="0 0 24 24"><use href="#i-tags"/></svg><span>对象样式</span></button>
        <button class="dtab plus" aria-label="添加"><svg viewBox="0 0 24 24"><use href="#i-plus"/></svg></button>
      </div>
    </div>
  </aside>

  <aside class="palette">
    <i class="grip h"></i><i class="rtri"></i>
    <svg class="pe"><use href="#i-eyed"/></svg>
    <svg class="chev"><use href="#i-up"/></svg>
    <div class="swatches" id="sw"></div>
    <svg class="chev"><use href="#i-down"/></svg>
    <svg class="chev last"><use href="#i-dgt"/></svg>
  </aside>
</main>

<footer class="status">
  <button class="ib fly" aria-label="选项"><svg><use href="#i-gear"/></svg></button>
  <span class="hint">删除交叉点之间的段</span>
  <div class="fillinfo"><svg class="ico"><use href="#i-bucket"/></svg><b class="chip"><svg><use href="#i-none"/></svg></b><span>无</span></div>
  <div class="peninfo"><svg class="ico"><use href="#i-pen"/></svg><b class="chip ink"></b><span class="cmyk"><span>C:</span><span>0 M:</span><span>0 Y:</span><span>0 K:</span><span>100</span></span></div>
  <div class="proof"><svg viewBox="0 0 18 18"><path d="M1.500 2.500h15v11h-15z" class="s"/><path d="M3 4h6v4H3z" fill="#e33"/><path d="M9 4h6v4H9z" fill="#0a9b3c"/><path d="M3 8h12v4H3z" fill="#0ad"/><circle cx="9" cy="8" r="2.500" fill="#fff" stroke="#333"/><path d="M4 16.500h10" stroke="#333" stroke-width="2"/></svg></div>
  <div class="ime">CH<svg viewBox="0 0 14 14"><path d="M6 2q4 4 0 7l-4 1q3 3 7 1 5-5-3-9z" class="s"/></svg>简</div>
  <div class="mark">
    <svg viewBox="0 0 44 40"><path d="M40 2Q8 2 3 26q1 8 9 10-5-22 28-34z" fill="#3a86c8"/><path d="M8 38q30 3 33-20-3-8-16-6 14 4 4 16-8 8-21 10z" fill="#6cc070"/><path d="M33 22q-3-9-13-4-8 6-3 12 8 0 11-8-6 0-8 5" fill="none" stroke="#3a86c8" stroke-width="2"/></svg>
    <div><strong>极光下载站</strong><span>www.xz7.com</span></div>
  </div>
</footer>
<script src="app.js"></script>
</body>
</html>
```
FILE: styles.css
```css
* { box-sizing: border-box; }
body { margin: 0; height: 100vh; display: flex; flex-direction: column; overflow: hidden; background: #f3f3f3; color: #000; font: 13px/18px "Open Sans", "Noto Sans CJK SC", sans-serif; }
button, input, select { font: inherit; color: inherit; margin: 0; padding: 0; border: 0; background: none; border-radius: 0; }
h1, h2, h3 { margin: 0; font-weight: 400; font-size: 13px; }
button { display: flex; align-items: center; white-space: nowrap; }
svg { display: block; flex: none; }
i { display: block; flex: none; }
.defs { position: absolute; width: 0; height: 0; }
.s { fill: none; stroke: #333; }
.g { fill: none; stroke: #b4b4b4; }
.ico { width: 24px; height: 24px; }

.titlebar { flex: none; height: 21px; background: #fff; display: flex; align-items: center; padding: 0 3px 0 3px; }
.logo { width: 16px; height: 18px; margin-right: 5px; }
.title span, .menubar span, .txt span, .tab span { font-size: 12px; }
.title { padding-bottom: 1px; }
.title span { white-space: pre; font-family: Roboto, sans-serif; }
.winbtns { margin-left: auto; display: flex; gap: 15px; }
.winbtns svg { width: 16px; height: 16px; }
.winbtns button:first-child { margin-right: 3px; }

.menubar { flex: none; height: 22px; background: #d7d7d7; display: flex; gap: 24px; padding-left: 10px; }
.menubar button { padding-bottom: 2px; }
.menubar u { text-underline-offset: 1px; }

.ib { position: relative; flex: none; width: 24px; height: 24px; justify-content: center; border: 0 solid #b0b0b0; }
.ib svg { width: 24px; height: 24px; }
.ib.on { background: #fff; outline: 1px solid #a8a8a8; outline-offset: -1px; }
.ib.hot { background: #ddeeff; outline: 1px solid #00aaff; outline-offset: -1px; }
.fly::after { content: ""; position: absolute; right: 1px; bottom: 1px; border: 2px solid; border-color: transparent #888 #888 transparent; }
.pair { display: flex; align-items: center; }
.tri { border: 4px solid transparent; border-top-color: #777; border-bottom: 0; }
.utri { border: 4px solid transparent; border-bottom-color: #777; border-top: 0; }
.rtri { border: 4px solid transparent; border-left-color: #777; border-right: 0; }
.drop { width: 16px; height: 24px; justify-content: center; }
.drop::after { content: ""; border: 4px solid transparent; border-top-color: #777; border-bottom: 0; }
.drop.off::after { border-top-color: #c4c4c4; }

.toolbar { flex: none; height: 32px; border-bottom: 1px solid #d7d7d7; display: flex; align-items: center; gap: 5px; padding-left: 4px; }
.sep { width: 3px; height: 22px; border-right: 1px solid #d0d0d0; }
.pdf { flex-direction: column; }
.pdf span { font: 9px/9px "Open Sans", sans-serif; padding-top: 3px; height: 12px; }
.pdf svg { height: 24px; margin-top: -12px; }
.zoomlevel { width: 86px; font-size: 12px; }
.txt { height: 24px; padding-bottom: 1px; }
.txt .tri { margin-left: auto; margin-right: 4px; }
.snap { width: 68px; padding-left: 6px; }
.launch { width: 54px; }

.combo { display: grid; height: 24px; background: #e9e9e9; border: 1px solid #b0b0b0; grid-template-columns: 1fr 16px; align-items: center; }
.combo select { appearance: none; grid-area: 1 / 1 / 2 / 3; height: 22px; padding: 0 0 1px 3px; outline: 0; min-width: 0; }
.combo::after { content: ""; grid-area: 1 / 2; justify-self: center; border: 4px solid transparent; border-top-color: #777; border-bottom: 0; pointer-events: none; }
.combo.edit { background: linear-gradient(to left, #e9e9e9 17px, #b0b0b0 17px, #b0b0b0 18px, #fff 18px); }
.spin { display: flex; height: 24px; background: #fff; border: 1px solid #b0b0b0; font-size: 12px; }
.spin input { flex: 1; min-width: 0; padding-left: 3px; }
.arrows { width: 18px; background: #e9e9e9; border-left: 1px solid #b0b0b0; display: flex; flex-direction: column; }
.arrows button { flex: 1; justify-content: center; }
.arrows button::after { content: ""; border: 3px solid transparent; border-bottom-color: #777; border-top: 0; }
.arrows button + button::after { border: 3px solid transparent; border-top-color: #777; border-bottom: 0; }
.spin.off { background: #f3f3f3; border-color: #cfcfcf; color: #777; }
.spin.off .arrows { background: #f3f3f3; border-color: #cfcfcf; opacity: .5; }
.w53 { width: 53px; } .w65 { width: 65px; } .w91 { width: 91px; } .w96 { width: 96px; } .w145 { width: 145px; } .w164 { width: 164px; }
.grow { flex: 1; min-width: 0; }

.propbar { flex: none; height: 43px; border-bottom: 1px solid #d7d7d7; display: flex; align-items: center; }
.psec { display: flex; align-items: center; gap: 5px; height: 38px; padding: 0 6px 0 5px; border-right: 1px solid #d0d0d0; }
.psec.first { padding: 0 9px 0 4px; }
.plabel { width: 44px; color: #c8c8c8; }
.padd { margin-left: 13px; }

.work { flex: 1; min-height: 0; display: flex; }
.toolbox { flex: none; width: 32px; border-right: 1px solid #d0d0d0; display: flex; flex-direction: column; gap: 5px; padding: 4px 0 0 4px; }
.hsep { width: 22px; height: 3px; border-bottom: 1px solid #d0d0d0; margin-left: 1px; }
.zi { font: 700 16px/24px "Noto Sans CJK SC", sans-serif; color: #333; padding-bottom: 2px; }
.tadd { margin-top: 5px; }
.anchor { position: relative; z-index: 5; }
.flyout { position: absolute; left: 25px; top: -1px; width: 159px; border: 1px solid #b0b0b0; background: linear-gradient(to right, #f3f3f3 26px, #fff 26px); padding: 2px; display: flex; flex-direction: column; }
.flyout button { height: 22px; border: 1px solid transparent; }
.flyout .ico { width: 22px; height: 22px; }
.flyout .cur { border-color: #00aaff; background: #ddeeff; }
.fname { flex: 1; text-align: left; padding: 0 0 2px 7px; }
.flyout kbd { font: 12px/18px "Open Sans", sans-serif; padding-right: 20px; }
.fsep { height: 1px; background: #d7d7d7; margin: 3px 0 3px 26px; }
.pointer { position: absolute; left: 103px; top: 33px; width: 14px; height: 20px; }
.callout { position: absolute; left: 128px; top: 28px; width: 134px; height: 20px; filter: drop-shadow(2px 3px 2px #0006); }

.doc { flex: 1; min-width: 0; display: flex; flex-direction: column; border-right: 1px solid #d0d0d0; padding-right: 2px; }
.tabs { height: 21px; flex: none; background: #e9e9e9; border-bottom: 1px solid #00aaff; display: flex; }
.tab { background: #d7d7d7; width: 114px; padding-bottom: 2px; }
.tab svg { width: 18px; height: 18px; margin-right: 16px; }
.tab.active { background: #cce2ff; width: 95px; padding-left: 9px; border-left: 1px solid #e9e9e9; }
.tab.more { width: 22px; padding: 0; justify-content: center; border-left: 1px solid #e9e9e9; }
.tab.more svg { width: 22px; height: 22px; margin: 0; }
.stage { flex: 1; min-height: 0; display: grid; grid-template: 18px 1fr 17px / 18px 1fr 16px; }
.corner svg { width: 16px; height: 16px; }
.hruler { grid-area: 1 / 2 / 2 / 4; min-width: 0; display: flex; border-bottom: 1px solid #d0d0d0; color: #888; font-size: 11px; overflow: hidden; }
.hruler svg { flex: 1; min-width: 0; height: 17px; overflow: hidden; }
.hruler span { width: 24px; line-height: 12px; }
.vruler { grid-area: 2 / 1 / 4 / 2; border-right: 1px solid #d0d0d0; overflow: hidden; }
.vruler svg { width: 17px; height: 100%; }
.stage text { font: 10px "Open Sans", sans-serif; fill: #888; text-anchor: middle; }
.tick { stroke: #999; }
.canvas { grid-area: 2 / 2; background: #fff; position: relative; overflow: hidden; }
.sheet { position: absolute; left: 530px; top: 82px; width: 458px; height: 646px; border: 1px solid #aaa; box-shadow: 6px 4px 0 #bfbfbf; background: #fff; }
.drawing { position: absolute; left: 530px; top: 80px; width: 449px; height: 393px; }
.vscroll { grid-area: 2 / 3; background: #fff; display: flex; flex-direction: column; }
.vscroll button { height: 17px; background: #f0f0f0; justify-content: center; color: #444; }
.vscroll svg, .hscroll svg { width: 10px; height: 10px; }
.thumb { background: #cdcdcd; }
.vscroll .thumb { flex: 430; margin-right: 1px; }
.gap1 { flex: 172; } .gap2 { flex: 171; }
.pagebar { grid-area: 3 / 2 / 4 / 4; display: flex; min-width: 0; }
.pages { width: 767px; flex: none; display: flex; align-items: center; border-top: 1px solid #888; border-right: 2px dotted #bbb; color: #aaa; }
.pages button, .pn { width: 16px; justify-content: center; text-align: center; line-height: 16px; }
.pages .pn { width: 15px; padding-bottom: 2px; }
.pages svg { width: 12px; height: 10px; }
.pages .addp { height: 12px; width: 10px; }
.pages .pagetab { width: 48px; height: 17px; display: grid; margin: -1px 0 0 7px; color: #000; }
.pages .pagetab > * { grid-area: 1 / 1; justify-self: center; }
.pages .pagetab span { padding: 0 4px 2px 0; }
.pages .pagetab svg { width: 48px; height: 17px; }
.hscroll { flex: 1; display: flex; padding: 1px 0; }
.hscroll button { width: 17px; justify-content: center; color: #333; }
.hscroll .thumb { flex: 1; }
.nav { width: 18px; justify-content: center; background: #fff; }
.nav svg { width: 14px; height: 14px; }
.docpal { flex: none; height: 21px; border-top: 1px solid #d0d0d0; display: flex; align-items: center; color: #b8b8b8; }
.grip { width: 5px; height: 16px; margin-left: 2px; background: radial-gradient(#b8b8b8 1px, transparent 1px) 0 0 / 3px 4px; }
.grip.h { width: 16px; height: 6px; margin: 2px 0 6px; background-size: 4px 3px; }
.side { width: 20px; justify-content: center; }
.dropper { width: 18px; height: 18px; }
.dropper svg { width: 18px; height: 18px; }
.docpal .chev, .palette .chev { width: 10px; height: 10px; color: #b8b8b8; }
.docpal .dropper + .chev { margin-left: 4px; }
.docpal .nosw { width: 18px; height: 18px; background: #fff; border: 1px solid #555; margin-left: 5px; }
.nosw svg { width: 16px; height: 16px; }
.docpal em { flex: 1; text-align: center; padding: 0 0 2px 16px; }
.docpal .d { margin: 0 11px 0 8px; }

.docker { flex: none; width: 315px; padding-left: 2px; display: flex; flex-direction: column; }
.dhead { flex: none; height: 21px; display: flex; align-items: center; gap: 9px; background: #ebebeb; padding: 0 6px 0 6px; margin-right: 1px; }
.dhead h2 { flex: 1; padding-bottom: 1px; }
.dhead svg { width: 10px; height: 9px; }
.dbody { flex: 1; min-height: 0; display: flex; border-top: 1px solid #b0b0b0; }
.dmain { flex: 1; display: flex; flex-direction: column; border-right: 1px solid #b0b0b0; min-width: 0; }
.dtools { flex: none; height: 28px; background: #e9e9e9; display: flex; align-items: center; gap: 2px; padding: 0 1px; }
.push { margin-left: auto; }
.dsep { height: 22px; width: 3px; border-left: 1px solid #ccc; }
.dcols { flex: 1; display: flex; min-height: 0; }
.props { flex: 1; min-width: 0; overflow: hidden; border-right: 1px solid #fff; }
.dscroll { width: 16px; background: #f0f0f0; display: flex; flex-direction: column; align-items: center; justify-content: space-between; color: #b8b8b8; padding: 2px 0; }
.dscroll svg { width: 9px; height: 9px; }
.shead { display: flex; align-items: center; height: 21px; padding-left: 9px; margin-bottom: 8px; }
.shead h3 { font: 700 14px/20px "Noto Sans CJK SC", sans-serif; margin-left: 10px; flex: 1; padding-bottom: 1px; }
.shead.line { border-top: 2px solid #e9e9e9; height: 25px; margin: 5px 0 6px; }
.sg { width: 11px; height: 11px; margin-right: 4px; }
.cell { flex: none; width: 20px; display: flex; justify-content: center; }
.cell i { width: 7px; height: 7px; background: #fff; outline: 1px solid #d7d7d7; outline-offset: -1px; }
.row { display: flex; align-items: center; height: 24px; margin-bottom: 5px; }
.row.top8 { margin-top: 13px; }
.lead { width: 23px; height: 23px; }
.lead.n { margin-left: -3px; }
.ablead { width: 15px; margin: 0 4px; height: 13px; background: #f60; color: #fff; font: 700 12px/12px "Open Sans", sans-serif; text-align: center; }
.ml { margin-left: 4px; }
.ml16 { margin-left: 16px; }
.sp1 { margin-left: 1px; }
.sw { width: 52px; height: 24px; margin-left: 5px; border: 1px solid #b0b0b0; background: linear-gradient(to left, #e9e9e9 17px, #b0b0b0 17px, #b0b0b0 18px, #fff 18px); justify-content: space-between; padding: 0 4px 0 3px; }
.sw::after { content: ""; border: 4px solid transparent; border-top-color: #777; border-bottom: 0; }
.sw b { width: 26px; height: 16px; }
.sw svg { width: 26px; height: 16px; }
.sw.flat { margin-left: 0; width: 53px; }
.ink { background: #231815; }
.black { background: #000; }
.expand { width: 100%; height: 18px; background: #e9e9e9; justify-content: center; }
.expand.big { margin-top: 15px; }
.row + .expand:not(.big) { margin-top: 7px; }
.aligns { gap: 5px; }
.dtabs { flex: none; width: 21px; background: #e9e9e9; border-right: 1px solid #d0d0d0; }
.dtab { width: 20px; height: 102px; background: #d7d7d7; flex-direction: column; gap: 2px; padding-top: 2px; }
.dtab svg { width: 20px; height: 20px; }
.dtab span { writing-mode: vertical-rl; text-orientation: sideways; }
.dtab.act { background: #b0b0b0; height: 74px; border-bottom: 1px solid #fff; gap: 4px; }
.dtab.plus { background: none; height: 24px; padding: 0; justify-content: center; }

.palette { flex: none; width: 20px; display: flex; flex-direction: column; align-items: center; overflow: hidden; }
.pe { width: 20px; height: 20px; margin: 4px 0; opacity: .3; flex: none; }
.palette .chev { flex: none; }
.swatches { width: 18px; flex: 1; min-height: 0; overflow: hidden; margin-top: 4px; border: 1px solid #555; border-bottom: 0; }
.swatches button { display: block; width: 16px; height: 17px; border-bottom: 1px solid #555; }
.swatches svg { width: 16px; height: 16px; }
.palette .chev + .chev { margin: 8px 0 11px; }
.swatches + .chev { margin-top: 3px; }

.status { flex: none; height: 33px; border-top: 1px solid #d0d0d0; display: flex; align-items: center; padding: 4px 10px 0 7px; position: relative; }
.hint { margin-left: 5px; flex: 1; padding-bottom: 1px; }
.fillinfo, .peninfo { display: flex; align-items: center; }
.fillinfo { width: 203px; }
.fillinfo span { margin-left: 4px; }
.chip { width: 22px; height: 22px; border: 1px solid #999; flex: none; }
.chip svg { width: 20px; height: 20px; }
.fillinfo .chip { background: #fff; }
.peninfo { width: 260px; }
.peninfo .ico { width: 20px; }
.cmyk { display: flex; gap: 10px; font: 12px/18px "Noto Sans CJK SC", sans-serif; margin-left: 4px; white-space: nowrap; }
.proof { width: 18px; }
.proof svg { width: 18px; height: 18px; }
.ime { position: absolute; right: 519px; top: -13px; width: 62px; height: 27px; background: #fff; border: 1px solid #999; border-radius: 6px; box-shadow: 0 1px 4px #0009; display: flex; align-items: center; justify-content: center; gap: 3px; color: #333; font-size: 12px; }
.ime svg { width: 13px; height: 13px; }
.mark { position: absolute; right: 12px; top: -20px; display: flex; opacity: .75; gap: 1px; pointer-events: none; }
.mark > svg { width: 42px; height: 40px; }
.mark div { display: flex; flex-direction: column; }
.mark strong { font: 700 21px/28px "Noto Sans CJK SC", sans-serif; color: #3f8fd4; }
.mark span { font: 700 16px/16px "Liberation Sans", sans-serif; color: #55b866; }
```
FILE: app.js
```js
const NS = 'http://www.w3.org/2000/svg';
const UNIT = 108.8 / 50;

function add(svg, name, attrs, text) {
  const el = document.createElementNS(NS, name);
  for (const k in attrs) el.setAttribute(k, attrs[k]);
  if (text !== undefined) el.textContent = text;
  svg.appendChild(el);
}

// Horizontal ruler: a tick each 5 mm, a label each 50 mm.
const hr = document.getElementById('hr');
for (let mm = -240; mm <= 460; mm += 5) {
  const x = Math.round(530 + mm * UNIT) + 0.5;
  const len = mm % 50 === 0 ? 5 : mm % 25 === 0 ? 2 : 1;
  add(hr, 'line', { x1: x, x2: x, y1: 16 - len, y2: 16, class: 'tick' });
  if (mm % 50 === 0 && mm < 450) add(hr, 'text', { x: x, y: 10 }, Math.abs(mm));
}

// Vertical ruler: zero lies at the foot of the page.
const vr = document.getElementById('vr');
for (let mm = -40; mm <= 330; mm += 5) {
  const y = Math.round(727 - mm * UNIT) + 0.5;
  const len = mm % 50 === 0 ? 5 : mm % 25 === 0 ? 2 : 1;
  add(vr, 'line', { x1: 15 - len, x2: 15, y1: y, y2: y, class: 'tick' });
  if (mm % 50 === 0) add(vr, 'text', { transform: `translate(11 ${y}) rotate(-90)` }, Math.abs(mm));
}

const colors = ['none', '#231815', '#3e3736', '#595757', '#727171', '#898989', '#9fa0a0', '#b5b5b6', '#c9caca', '#dcdddd', '#efefef', '#ffffff', '#1d2088', '#00a0e9', '#009944', '#fff100', '#e60012', '#e4007f', '#af4283', '#f08300', '#f4b1b0', '#86736a', '#d0cce4', '#a59aca', '#6f8ac6', '#796baf', '#8f82ad', '#50658f', '#5a5270', '#7487a1', '#008ed8', '#9fd9f6', '#b6cdd9', '#97a8b0', '#6f7f88', '#4a545c', '#557470', '#438a7a', '#739997', '#55a896', '#5aa572', '#5bc2cf', '#50a8b5', '#b8cbbd', '#d5ebd9', '#a3d5ab'];
const sw = document.getElementById('sw');
for (const c of colors) {
  const b = document.createElement('button');
  b.setAttribute('aria-label', c);
  b.style.background = c === 'none' ? '#fff' : c;
  if (c === 'none') b.innerHTML = '<svg><use href="#i-none"/></svg>';
  sw.appendChild(b);
}
```
